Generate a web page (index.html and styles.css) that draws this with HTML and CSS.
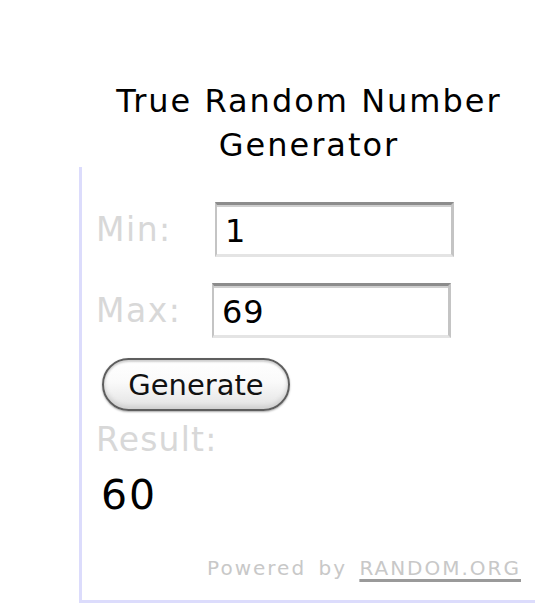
FILE: index.html
```html
<!DOCTYPE html>
<html>
<head>
<meta charset="utf-8">
<link rel="stylesheet" href="styles.css">
</head>
<body>
<h1 class="title">True Random Number<br>Generator</h1>
<div class="frame">
  <div class="row row-min">
    <span class="label label-min">Min:</span>
    <input class="field" type="text" value="1">
  </div>
  <div class="row row-max">
    <span class="label label-max">Max:</span>
    <input class="field" type="text" value="69">
  </div>
  <button class="generate" type="button">Generate</button>
  <div class="result-label">Result:</div>
  <div class="result">60</div>
  <div class="powered">Powered by <a class="link" href="#">RANDOM.ORG</a></div>
</div>
</body>
</html>
```
FILE: styles.css
```css
html, body {
  margin: 0;
  padding: 0;
  background: #ffffff;
  overflow: hidden;
}
body {
  font-family: "DejaVu Sans", Verdana, sans-serif;
  color: #000;
}
.title {
  box-sizing: border-box;
  margin: 0 0 0 79px;
  padding: 79px 0 0 4px;
  width: 456px;
  text-align: center;
  font-size: 32px;
  line-height: 44px;
  font-weight: normal;
  letter-spacing: 2px;
}
.frame {
  box-sizing: border-box;
  margin-left: 79px;
  width: 456px;
  border-left: 3px solid #dcdcfc;
  border-bottom: 3px solid #dcdcfc;
  padding: 35px 0 19px 14px;
  display: flex;
  flex-direction: column;
  align-items: flex-start;
}
.row {
  display: flex;
  align-items: center;
}
.row-max {
  margin-top: 26px;
}
.label {
  font-size: 33px;
  line-height: 40px;
  letter-spacing: 1.5px;
  color: #d8d8d8;
}
.label-min { width: 119px; }
.label-max { width: 116px; }
.field {
  box-sizing: border-box;
  width: 239px;
  height: 55px;
  margin: 0;
  padding: 2px 0 0 8px;
  font-family: "DejaVu Sans", Verdana, sans-serif;
  font-size: 32px;
  letter-spacing: 1px;
  color: #000;
  background: #fff;
  border-style: solid;
  border-width: 3px 3px 3px 2px;
  border-color: #8c8c8c #c4c4c4 #e4e4e4 #c4c4c4;
  box-shadow: inset 0 2px 0 #cfcfcf;
  outline: none;
}
.generate {
  margin: 20px 0 0 6px;
  box-sizing: border-box;
  width: 188px;
  height: 53px;
  padding: 0;
  border: 2px solid #5e5e5e;
  border-radius: 27px;
  background: linear-gradient(#ffffff 0%, #fafafa 45%, #e2e2e2 100%);
  box-shadow: 0 1px 2px #a8a8a8, inset 0 -3px 4px #cfcfcf, inset 0 2px 2px #d0d0d0;
  font-family: "DejaVu Sans", Verdana, sans-serif;
  font-size: 29px;
  color: #111;
}
.result-label {
  margin-top: 9px;
  font-size: 33px;
  line-height: 40px;
  letter-spacing: 1.2px;
  color: #d8d8d8;
}
.result {
  margin: 11px 0 0 5px;
  font-size: 41px;
  line-height: 48px;
  letter-spacing: 2px;
  color: #000;
}
.powered {
  align-self: stretch;
  margin-top: 36px;
  padding-right: 14px;
  text-align: right;
  font-size: 20px;
  line-height: 26px;
  letter-spacing: 2px;
  word-spacing: 4px;
  color: #c8c8c8;
}
.link {
  color: #c8c8c8;
  text-decoration: underline;
  text-decoration-color: #9a9a9a;
  text-decoration-thickness: 3px;
  text-underline-offset: 4px;
}
```
